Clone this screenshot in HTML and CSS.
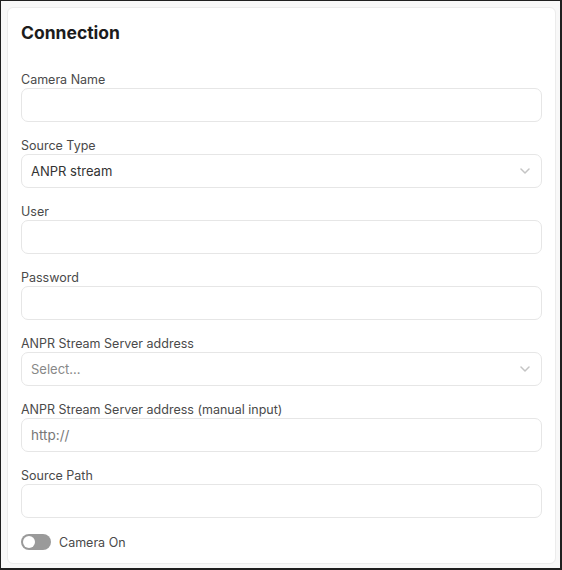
FILE: index.html
```html
<!DOCTYPE html>
<html lang="en">
<head>
    <meta charset="UTF-8">
    <meta name="viewport" content="width=device-width, initial-scale=1.0">
    <title>Connection</title>
    <link rel="stylesheet" href="styles.css">
</head>
<body>
    <div class="frame">
        <div class="card">
            <h2>Connection</h2>
            <div class="field">
                <label>Camera Name</label>
                <input type="text" class="text-input">
            </div>
            <div class="field">
                <label>Source Type</label>
                <div class="select">
                    <span class="value">ANPR stream</span>
                    <svg class="chevron" width="10" height="6" viewBox="0 0 10 6"><path d="M1 1l4 4 4-4" fill="none" stroke="#c4c4c4" stroke-width="1.5" stroke-linecap="round" stroke-linejoin="round"/></svg>
                </div>
            </div>
            <div class="field">
                <label>User</label>
                <input type="text" class="text-input">
            </div>
            <div class="field">
                <label>Password</label>
                <input type="password" class="text-input">
            </div>
            <div class="field">
                <label>ANPR Stream Server address</label>
                <div class="select">
                    <span class="value placeholder">Select...</span>
                    <svg class="chevron" width="10" height="6" viewBox="0 0 10 6"><path d="M1 1l4 4 4-4" fill="none" stroke="#c4c4c4" stroke-width="1.5" stroke-linecap="round" stroke-linejoin="round"/></svg>
                </div>
            </div>
            <div class="field">
                <label>ANPR Stream Server address (manual input)</label>
                <input type="text" class="text-input" placeholder="http://">
            </div>
            <div class="field">
                <label>Source Path</label>
                <input type="text" class="text-input">
            </div>
            <div class="toggle-row">
                <span class="toggle"><span class="knob"></span></span>
                <span>Camera On</span>
            </div>
        </div>
    </div>
</body>
</html>
```

FILE: styles.css
```css
body {
    margin: 0;
    font-family: Inter, "Open Sans", sans-serif;
    color: #3a3a3a;
}
.frame {
    box-sizing: border-box;
    width: 562px;
    height: 570px;
    border: 1px solid #1f1f1f;
    border-right-width: 2px;
    border-bottom-width: 2px;
    padding: 6px 4px 4px 6px;
    background-color: #f8f8f8;
    display: flex;
}
.card {
    flex: 1;
    background-color: #fff;
    border: 1px solid #ececec;
    border-radius: 6px;
    padding: 14px 13px;
}
h2 {
    margin: 0 0 28px 0;
    font-size: 17.5px;
    line-height: 22px;
    font-weight: 700;
    color: #1c1c1c;
}
.field {
    margin-bottom: 16px;
}
.field label {
    display: block;
    font-size: 12.5px;
    line-height: 16px;
    color: #4a4a4a;
}
.text-input,
.select {
    box-sizing: border-box;
    width: 100%;
    height: 34px;
    border: 1px solid #e6e6e6;
    border-radius: 7px;
    background-color: #fff;
    padding: 0 9px;
    font-family: inherit;
    font-size: 13px;
    color: #333;
}
.text-input::placeholder {
    color: #777;
    font-size: 13.5px;
}
.select {
    display: flex;
    align-items: center;
    justify-content: space-between;
}
.select .value {
    color: #333;
}
.select .placeholder {
    color: #888;
}
.chevron {
    margin-right: 2px;
}
.toggle-row {
    display: flex;
    align-items: center;
    gap: 8px;
    font-size: 12.5px;
    color: #4a4a4a;
}
.toggle {
    width: 30px;
    height: 16px;
    border-radius: 8px;
    background-color: #9a9a9a;
    display: flex;
    align-items: center;
    padding: 0 2px;
    box-sizing: border-box;
}
.knob {
    width: 12px;
    height: 12px;
    border-radius: 50%;
    background-color: #fff;
}
```
